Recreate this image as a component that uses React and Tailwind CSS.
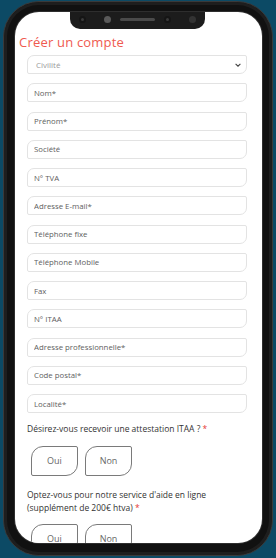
import React from "react";

const fields = [
  "Nom*",
  "Prénom*",
  "Société",
  "N° TVA",
  "Adresse E-mail*",
  "Téléphone fixe",
  "Téléphone Mobile",
  "Fax",
  "N° ITAA",
  "Adresse professionnelle*",
  "Code postal*",
  "Localité*",
];

function Choice({ label }) {
  return (
    <button
      type="button"
      className="w-[47px] h-[30px] border border-[#7a7a7a] bg-white rounded-tl-[12px] rounded-br-[12px] rounded-tr-[2px] rounded-bl-[2px] text-[9px] text-[#666] flex items-center justify-center"
    >
      {label}
    </button>
  );
}

export default function App() {
  return (
    <div
      className="w-[276px] h-[558px] bg-[#0c4a65] overflow-hidden"
      style={{ fontFamily: '"Open Sans", "Liberation Sans", sans-serif' }}
    >
      <div className="relative mx-[3px] mt-[1px] h-[555px] w-[270px] rounded-[36px] bg-[#111] border border-[#3a3a3a] pt-[10px] pl-[11px] pr-[10px] pb-[12px] shadow-[inset_0_0_0_3px_#1e1e1e]">
        <div className="relative h-full rounded-[24px] bg-white overflow-hidden shadow-[0_0_0_1px_#2e2e2e]">
          {/* notch */}
          <div className="absolute left-[55px] top-0 w-[135px] h-[17px] bg-[#1c1c1c] rounded-b-[10px]">
            <span className="absolute left-[9px] top-[4px] w-[7px] h-[7px] rounded-full bg-[#3a3a3a] border-2 border-[#151515]" />
            <span className="absolute left-[34px] top-[4px] w-[7px] h-[7px] rounded-full bg-[#5a5a5a]" />
            <span className="absolute left-[50px] top-[6px] w-[35px] h-[3px] rounded-full bg-[#4a4a4a]" />
            <span className="absolute left-[94px] top-[4px] w-[7px] h-[7px] rounded-full bg-[#3a3a3a] border-2 border-[#151515]" />
            <span className="absolute left-[119px] top-[4px] w-[7px] h-[7px] rounded-full bg-[#333]" />
          </div>

          <div className="pt-[21px]">
            <h1 className="pl-[4px] text-[13px] leading-[18px] text-[#ef5a50] font-normal tracking-[0.2px]">
              Créer un compte
            </h1>

            <div className="ml-[12px] w-[220px] mt-[4px] flex flex-col gap-[9.25px]">
              <div className="h-[19px] border border-[#e3e3e3] rounded-tl-[7px] rounded-br-[7px] rounded-tr-[2px] rounded-bl-[2px] flex items-center justify-between pl-[8px] pr-[4px]">
                <span className="text-[8px] text-[#9a9a9a]">Civilité</span>
                <svg width="8" height="8" viewBox="0 0 10 10" className="text-[#444]">
                  <path d="M2 3.5 L5 6.5 L8 3.5" fill="none" stroke="currentColor" strokeWidth="1.4" />
                </svg>
              </div>
              {fields.map((f) => (
                <input
                  key={f}
                  placeholder={f}
                  className="h-[19px] w-full border border-[#e3e3e3] rounded-tl-[7px] rounded-br-[7px] rounded-tr-[2px] rounded-bl-[2px] pl-[6px] text-[7.8px] placeholder:text-[#5e5e5e] outline-none"
                />
              ))}
            </div>

            <div className="ml-[12px] w-[225px] mt-[8.5px] text-[8.5px] leading-[13px] text-[#333] whitespace-nowrap">
              Désirez-vous recevoir une attestation ITAA ? <span className="text-[#e53935]">*</span>
            </div>
            <div className="ml-[16px] mt-[11.5px] flex gap-[7px]">
              <Choice label="Oui" />
              <Choice label="Non" />
            </div>

            <div className="ml-[12px] w-[225px] mt-[11.5px] text-[8.5px] leading-[13px] text-[#333] whitespace-nowrap">
              Optez-vous pour notre service d'aide en ligne
              <br />
              (supplément de 200€ htva) <span className="text-[#e53935]">*</span>
            </div>
            <div className="ml-[16px] mt-[10.5px] flex gap-[7px]">
              <Choice label="Oui" />
              <Choice label="Non" />
            </div>
          </div>
        </div>
      </div>
    </div>
  );
}
